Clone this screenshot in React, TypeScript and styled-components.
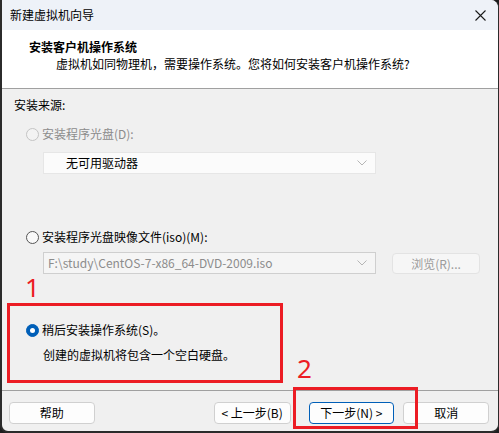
import React from 'react';
import styled, { createGlobalStyle } from 'styled-components';

const GlobalStyle = createGlobalStyle`
  html, body {
    margin: 0;
    padding: 0;
    background: #1e1e1e;
  }
  * {
    box-sizing: border-box;
  }
`;

const FONT = `"Noto Sans CJK SC", "Noto Sans", sans-serif`;

const Window = styled.div`
  position: relative;
  width: 499px;
  height: 433px;
  display: flex;
  flex-direction: column;
  background: #f0f0f0;
  border: 1px solid #2b2b2b;
  border-top: none;
  border-left-width: 2px;
  border-bottom-width: 2px;
  border-radius: 0 8px 8px 8px;
  overflow: hidden;
  font-family: ${FONT};
  font-size: 12px;
  color: #000;
`;

const TitleBar = styled.div`
  height: 30px;
  flex: none;
  display: flex;
  align-items: center;
  justify-content: space-between;
  padding: 0 12px 0 8px;
  background: #eef2f8;
`;

const TitleText = styled.span`
  line-height: 16px;
`;

const Header = styled.div`
  height: 59px;
  flex: none;
  padding: 9px 0 0 27px;
  background: #ffffff;
  border-bottom: 1px solid #a0a0a0;
`;

const HeaderTitle = styled.div`
  font-weight: 700;
  line-height: 16px;
`;

const HeaderSub = styled.div`
  margin: 1px 0 0 27px;
  line-height: 16px;
`;

const Body = styled.div`
  flex: 1;
  display: flex;
  flex-direction: column;
  padding: 8px 0 0 12px;
`;

const SourceLabel = styled.div`
  line-height: 16px;
`;

const RadioRow = styled.label<{ $top: number; $disabled?: boolean }>`
  display: flex;
  align-items: center;
  gap: 3px;
  margin: ${(p) => p.$top}px 0 0 12px;
  line-height: 16px;
  color: ${(p) => (p.$disabled ? '#8c8c8c' : '#000')};
`;

const RadioDot = styled.span<{ $state: 'disabled' | 'off' | 'on' }>`
  width: 13px;
  height: 13px;
  flex: none;
  border-radius: 50%;
  display: flex;
  align-items: center;
  justify-content: center;
  background: ${(p) =>
    p.$state === 'on' ? '#005fb8' : p.$state === 'disabled' ? '#f3f3f3' : '#f9f9f9'};
  border: 1px solid
    ${(p) => (p.$state === 'on' ? '#005fb8' : p.$state === 'disabled' ? '#c4c4c4' : '#555555')};

  &::after {
    content: '';
    display: ${(p) => (p.$state === 'on' ? 'block' : 'none')};
    width: 5px;
    height: 5px;
    border-radius: 50%;
    background: #ffffff;
  }
`;

const FieldRow = styled.div<{ $top: number }>`
  display: flex;
  align-items: center;
  gap: 16px;
  margin: ${(p) => p.$top}px 0 0 29px;
`;

const Combo = styled.div<{ $disabled?: boolean }>`
  width: 333px;
  height: 22px;
  display: flex;
  align-items: center;
  justify-content: space-between;
  padding: 0 8px 0 ${(p) => (p.$disabled ? '4px' : '22px')};
  background: ${(p) => (p.$disabled ? '#f5f5f5' : '#fbfbfb')};
  border: 1px solid ${(p) => (p.$disabled ? '#cfcfcf' : '#e6e6e6')};
  color: ${(p) => (p.$disabled ? '#8c8c8c' : '#000')};
  line-height: 16px;
`;

const BrowseButton = styled.div`
  width: 88px;
  height: 21px;
  display: flex;
  align-items: center;
  justify-content: center;
  background: #f6f6f6;
  border: 1px solid #e3e3e3;
  border-radius: 4px;
  color: #9a9a9a;
`;

const Note = styled.div`
  margin: 9px 0 0 29px;
  line-height: 16px;
`;

const Footer = styled.div`
  height: 41px;
  flex: none;
  display: flex;
  align-items: flex-start;
  padding: 11px 9px 0 7px;
  border-top: 1px solid #a0a0a0;
`;

const Button = styled.div<{ $width: number; $gap?: number; $primary?: boolean }>`
  width: ${(p) => p.$width}px;
  height: 22px;
  margin-left: ${(p) => p.$gap ?? 0}px;
  display: flex;
  align-items: center;
  justify-content: center;
  background: #fdfdfd;
  border: 1px solid ${(p) => (p.$primary ? '#005fb8' : '#d0d0d0')};
  border-radius: 4px;
  line-height: 16px;
`;

const Mark = styled.div<{ $left: number; $top: number; $w: number; $h: number }>`
  position: absolute;
  left: ${(p) => p.$left}px;
  top: ${(p) => p.$top}px;
  width: ${(p) => p.$w}px;
  height: ${(p) => p.$h}px;
  border: 3px solid #ec1c24;
  pointer-events: none;
`;

const Num = styled.div<{ $left: number; $top: number }>`
  position: absolute;
  left: ${(p) => p.$left}px;
  top: ${(p) => p.$top}px;
  font-family: "Noto Sans", sans-serif;
  font-size: 26px;
  line-height: 26px;
  color: #ec1c24;
`;

const Chevron = ({ color }: { color: string }) => (
  <svg width="10" height="6" viewBox="0 0 10 6">
    <polyline points="0.5,0.5 5,5 9.5,0.5" fill="none" stroke={color} strokeWidth="1" />
  </svg>
);

const CloseIcon = () => (
  <svg width="11" height="11" viewBox="0 0 11 11">
    <path d="M0.5 0.5 L10.5 10.5 M10.5 0.5 L0.5 10.5" stroke="#1a1a1a" strokeWidth="1.1" />
  </svg>
);

export default function App() {
  return (
    <>
      <GlobalStyle />
      <Window>
        <TitleBar>
          <TitleText>新建虚拟机向导</TitleText>
          <CloseIcon />
        </TitleBar>

        <Header>
          <HeaderTitle>安装客户机操作系统</HeaderTitle>
          <HeaderSub>虚拟机如同物理机，需要操作系统。您将如何安装客户机操作系统?</HeaderSub>
        </Header>

        <Body>
          <SourceLabel>安装来源:</SourceLabel>

          <RadioRow $top={13} $disabled>
            <RadioDot $state="disabled" />
            安装程序光盘(D):
          </RadioRow>
          <FieldRow $top={10}>
            <Combo>
              <span>无可用驱动器</span>
              <Chevron color="#b5b5b5" />
            </Combo>
          </FieldRow>

          <RadioRow $top={55}>
            <RadioDot $state="off" />
            安装程序光盘映像文件(iso)(M):
          </RadioRow>
          <FieldRow $top={7}>
            <Combo $disabled>
              <span>F:\study\CentOS-7-x86_64-DVD-2009.iso</span>
              <Chevron color="#b5b5b5" />
            </Combo>
            <BrowseButton>浏览(R)...</BrowseButton>
          </FieldRow>

          <RadioRow $top={48}>
            <RadioDot $state="on" />
            稍后安装操作系统(S)。
          </RadioRow>
          <Note>创建的虚拟机将包含一个空白硬盘。</Note>
        </Body>

        <Footer>
          <Button $width={86}>帮助</Button>
          <Button $width={77} $gap={119}>&lt; 上一步(B)</Button>
          <Button $width={86} $gap={18} $primary>下一步(N) &gt;</Button>
          <Button $width={86} $gap={9}>取消</Button>
        </Footer>

        <Num $left={23} $top={274}>1</Num>
        <Mark $left={5} $top={303} $w={276} $h={80} />
        <Num $left={295} $top={355}>2</Num>
        <Mark $left={291} $top={387} $w={125} $h={42} />
      </Window>
    </>
  );
}
